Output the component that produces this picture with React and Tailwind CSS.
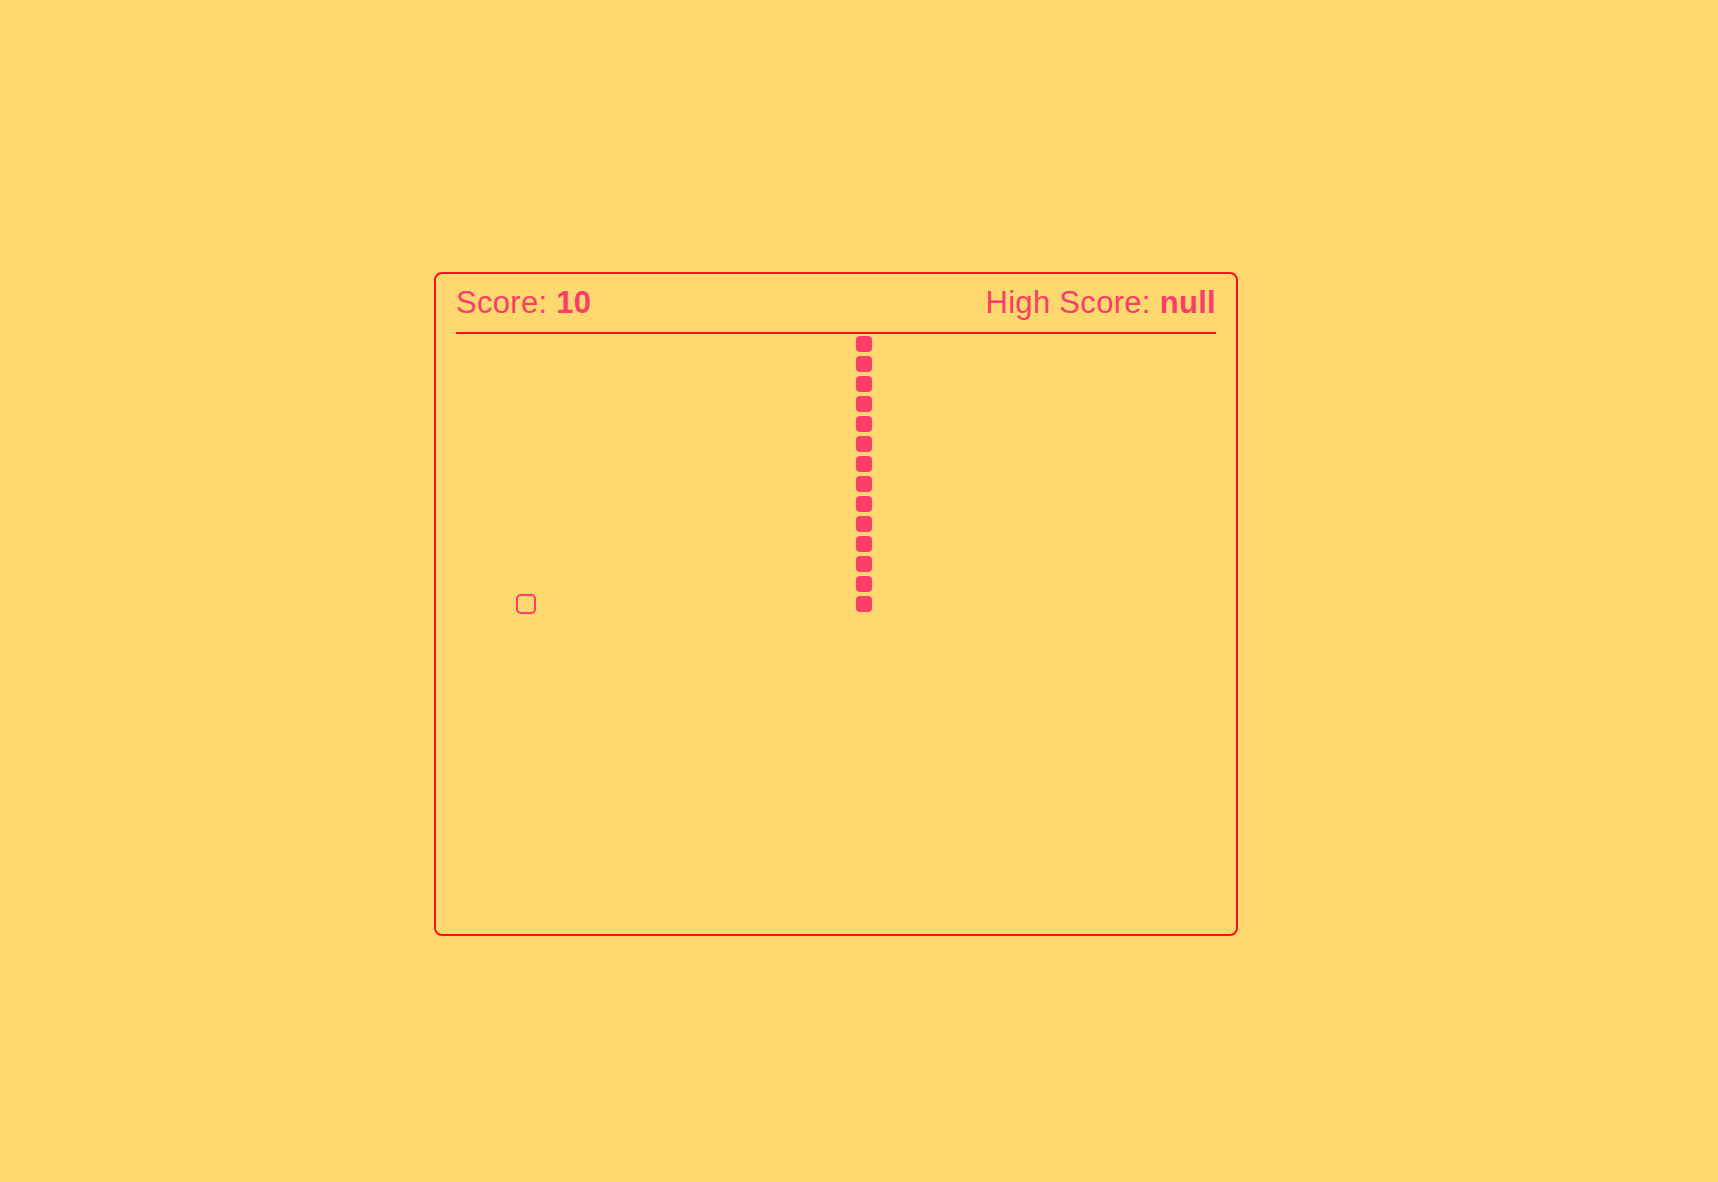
export default function App() {
  const segs = Array.from({ length: 14 }, (_, i) => i);
  return (
    <div className="min-h-screen w-full bg-[#ffd870] pt-[272px] pl-[434px]" style={{ fontFamily: '"Liberation Sans", Arial, sans-serif' }}>
      <div className="w-[804px] h-[664px] border-2 border-[#ff1020] rounded-[8px] px-[20px] flex flex-col">
        <div className="flex justify-between items-center border-b-2 border-[#ff1020] pt-[12px] pb-[12px] text-[31px] leading-[34px] tracking-[0.3px] text-[#ff3d68]">
          <div>Score: <span className="font-bold">10</span></div>
          <div>High Score: <span className="font-bold">null</span></div>
        </div>
        <div className="relative flex-1">
          {segs.map((i) => (
            <div key={i} className="absolute w-[16px] h-[16px] rounded-[4px] bg-[#ff3d68] left-[400px]" style={{ top: 2 + i * 20 }} />
          ))}
          <div className="absolute left-[60px] top-[260px] w-[20px] h-[20px] border-2 border-[#ff3d68] rounded-[5px]" />
        </div>
      </div>
    </div>
  );
}
